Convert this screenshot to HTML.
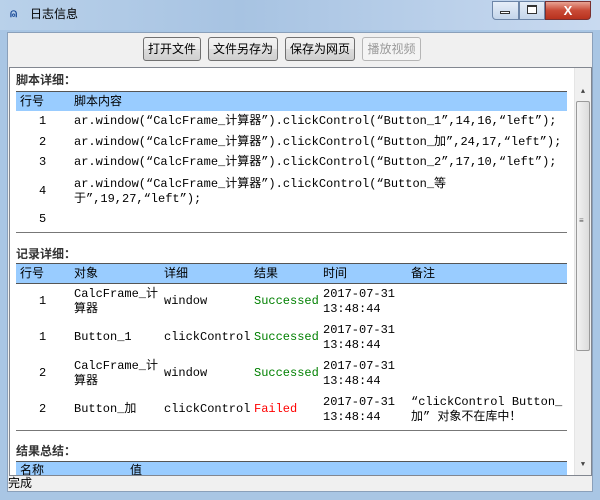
<!DOCTYPE html>
<html><head><meta charset="utf-8"><style>
*{margin:0;padding:0;box-sizing:border-box}
body{width:600px;height:500px;overflow:hidden;background:#a9c6e4;font-family:"Liberation Mono","Noto Sans CJK SC",monospace;font-size:12px;line-height:15px;color:#000;position:relative}
.a{position:absolute;white-space:nowrap;line-height:15px}
.cj{font-family:"Liberation Sans","Noto Sans CJK SC",sans-serif}
.b{font-weight:bold;color:#333}
.btn{position:absolute;top:37px;height:24px;border:1px solid #707070;border-radius:3px;background:linear-gradient(#f2f2f2,#ebebeb 50%,#dddddd 50%,#cfcfcf);font-family:"Liberation Sans","Noto Sans CJK SC",sans-serif;font-size:12px;line-height:22px;text-align:center}
.hdr{position:absolute;left:16px;width:551px;background:#99ccff;border-top:1px solid #555}
.line{position:absolute;left:16px;width:551px;height:1px;background:#777}
.g{color:#008000}.r{color:#ff0000}
</style></head><body>
<div class="a" style="left:0;top:0;width:600px;height:30px;background:linear-gradient(90deg,#b9d1ea,#a7c3e2 40%,#c9daf0)"></div>
<div class="a cj" style="left:10px;top:6px;font-size:12px;color:#1d4d9a;font-weight:bold">⍝</div>
<div class="a cj" style="left:30px;top:7px;font-size:12px">日志信息</div>
<div class="a" style="left:492px;top:1px;width:27px;height:19px;border:1px solid #6d86a8;border-radius:0 0 0 4px;background:linear-gradient(#e6eef8,#c4d5ea)"></div>
<div class="a" style="left:500px;top:11px;width:10px;height:3px;border:1px solid #333;background:#fff"></div>
<div class="a" style="left:519px;top:1px;width:26px;height:19px;border:1px solid #6d86a8;background:linear-gradient(#e6eef8,#c4d5ea)"></div>
<div class="a" style="left:527px;top:5px;width:10px;height:9px;border:1px solid #333;border-top-width:2px;background:#fff"></div>
<div class="a" style="left:545px;top:1px;width:46px;height:19px;border:1px solid #7a3030;border-radius:0 0 4px 0;background:linear-gradient(#e8a393,#c94a36 50%,#b8321e);color:#fff;font-weight:bold;font-family:'Liberation Sans';font-size:13px;text-align:center;line-height:17px">X</div>

<div class="a" style="left:7px;top:32px;width:586px;height:460px;background:#f0f0f0;border:1px solid #8aa0ba"></div>
<div class="btn" style="left:143px;width:58px">打开文件</div>
<div class="btn" style="left:208px;width:70px">文件另存为</div>
<div class="btn" style="left:285px;width:70px">保存为网页</div>
<div class="btn" style="left:362px;width:59px;color:#9a9a9a;border-color:#b5b5b5;background:#f4f4f4">播放视频</div>

<div class="a" style="left:9px;top:67px;width:583px;height:409px;background:#fff;border:1px solid #828790"></div>
<div class="a" style="left:574px;top:68px;width:17px;height:407px;background:#f0f0f0;border-left:1px solid #e5e5e5"></div>
<div class="a" style="left:576px;top:85px;width:14px;font-size:7px;color:#444;text-align:center">▲</div>
<div class="a" style="left:576px;top:101px;width:14px;height:250px;border:1px solid #9a9a9a;border-radius:2px;background:linear-gradient(90deg,#f3f3f3,#dcdcdc)"></div>
<div class="a" style="left:579px;top:214px;font-size:8px;color:#555">≡</div>
<div class="a" style="left:576px;top:458px;width:14px;font-size:7px;color:#444;text-align:center">▼</div>

<div class="a cj b" style="left:16px;top:73px">脚本详细：</div>
<div class="hdr" style="top:91px;height:20px"></div>
<div class="a cj" style="left:20px;top:94px">行号</div>
<div class="a cj" style="left:74px;top:94px">脚本内容</div>
<div class="a" style="left:39px;top:114px">1</div><div class="a" style="left:74px;top:114px">ar.window(“CalcFrame_计算器”).clickControl(“Button_1”,14,16,“left”);</div>
<div class="a" style="left:39px;top:135px">2</div><div class="a" style="left:74px;top:135px">ar.window(“CalcFrame_计算器”).clickControl(“Button_加”,24,17,“left”);</div>
<div class="a" style="left:39px;top:155px">3</div><div class="a" style="left:74px;top:155px">ar.window(“CalcFrame_计算器”).clickControl(“Button_2”,17,10,“left”);</div>
<div class="a" style="left:39px;top:184px">4</div><div class="a" style="left:74px;top:177px">ar.window(“CalcFrame_计算器”).clickControl(“Button_等</div><div class="a" style="left:74px;top:192px">于”,19,27,“left”);</div>
<div class="a" style="left:39px;top:212px">5</div>
<div class="line" style="top:232px"></div>

<div class="a cj b" style="left:16px;top:247px">记录详细：</div>
<div class="hdr" style="top:263px;height:21px;border-bottom:1px solid #555"></div>
<div class="a cj" style="left:20px;top:266px">行号</div>
<div class="a cj" style="left:74px;top:266px">对象</div>
<div class="a cj" style="left:164px;top:266px">详细</div>
<div class="a cj" style="left:254px;top:266px">结果</div>
<div class="a cj" style="left:323px;top:266px">时间</div>
<div class="a cj" style="left:411px;top:266px">备注</div>

<div class="a" style="left:39px;top:294px">1</div><div class="a" style="left:74px;top:287px">CalcFrame_计<br>算器</div><div class="a" style="left:164px;top:294px">window</div><div class="a g" style="left:254px;top:294px">Successed</div><div class="a" style="left:323px;top:287px">2017-07-31<br>13:48:44</div>
<div class="a" style="left:39px;top:330px">1</div><div class="a" style="left:74px;top:330px">Button_1</div><div class="a" style="left:164px;top:330px">clickControl</div><div class="a g" style="left:254px;top:330px">Successed</div><div class="a" style="left:323px;top:323px">2017-07-31<br>13:48:44</div>
<div class="a" style="left:39px;top:366px">2</div><div class="a" style="left:74px;top:359px">CalcFrame_计<br>算器</div><div class="a" style="left:164px;top:366px">window</div><div class="a g" style="left:254px;top:366px">Successed</div><div class="a" style="left:323px;top:359px">2017-07-31<br>13:48:44</div>
<div class="a" style="left:39px;top:402px">2</div><div class="a" style="left:74px;top:402px">Button_加</div><div class="a" style="left:164px;top:402px">clickControl</div><div class="a r" style="left:254px;top:402px">Failed</div><div class="a" style="left:323px;top:395px">2017-07-31<br>13:48:44</div><div class="a" style="left:411px;top:395px">“clickControl Button_<br>加” 对象不在库中！</div>
<div class="line" style="top:430px"></div>

<div class="a cj b" style="left:16px;top:444px">结果总结：</div>
<div class="hdr" style="top:461px;height:14px;overflow:hidden"></div>
<div class="a cj" style="left:20px;top:463px;height:12px;overflow:hidden">名称</div>
<div class="a cj" style="left:130px;top:463px;height:12px;overflow:hidden">值</div>

<div class="a" style="left:8px;top:476px;width:584px;height:15px;background:#f0f0f0"></div>
<div class="a cj" style="left:8px;top:476px">完成</div>
</body></html>
